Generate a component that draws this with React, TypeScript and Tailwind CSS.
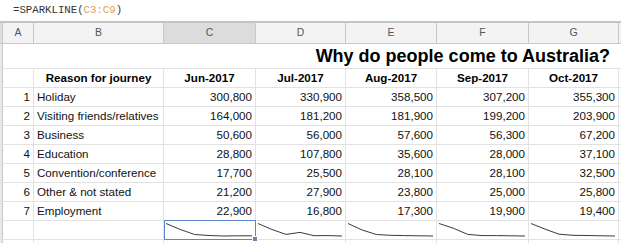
import React from "react";

const cols = [
  { key: "A", w: 31 },
  { key: "B", w: 130 },
  { key: "C", w: 92 },
  { key: "D", w: 90 },
  { key: "E", w: 91 },
  { key: "F", w: 92 },
  { key: "G", w: 90 },
];

const months = ["Jun-2017", "Jul-2017", "Aug-2017", "Sep-2017", "Oct-2017"];

const rows: [string, number[]][] = [
  ["Holiday", [300800, 330900, 358500, 307200, 355300]],
  ["Visiting friends/relatives", [164000, 181200, 181900, 199200, 203900]],
  ["Business", [50600, 56000, 57600, 56300, 67200]],
  ["Education", [28800, 107800, 35600, 28000, 37100]],
  ["Convention/conference", [17700, 25500, 28100, 28100, 32500]],
  ["Other & not stated", [21200, 27900, 23800, 25000, 25800]],
  ["Employment", [22900, 16800, 17300, 19900, 19400]],
];

const fmt = (n: number) => n.toLocaleString("en-US");

function Spark({ values, w }: { values: number[]; w: number }) {
  const max = Math.max(...values);
  const min = Math.min(...values);
  const h = 18;
  const top = 2.5;
  const bottom = 15;
  const pts = values
    .map((v, i) => {
      const x = 2 + (i * (w - 5)) / (values.length - 1);
      const y = top + ((max - v) / (max - min)) * (bottom - top);
      return `${x.toFixed(1)},${y.toFixed(1)}`;
    })
    .join(" ");
  return (
    <svg width={w} height={h} className="block">
      <polyline points={pts} fill="none" stroke="#3a3a3a" strokeWidth="1" />
    </svg>
  );
}

export default function App() {
  const font = { fontFamily: '"Liberation Sans", Arial, sans-serif' };
  return (
    <div className="w-[621px] h-[243px] overflow-hidden bg-white text-[#222]" style={font}>
      {/* formula bar */}
      <div className="h-[23px] flex items-center pl-[13px] pb-[1px] border-b-2 border-[#c4c4c4] bg-white">
        <span className="text-[10.7px] text-[#333]" style={{ fontFamily: '"Liberation Mono", monospace' }}>
          =SPARKLINE(<span className="text-[#d6a35c]">C3:C9</span>)
        </span>
      </div>
      {/* column headers */}
      <div className="flex h-[21px] border-b border-[#c8c8c8] bg-[#f3f3f3]">
        <div className="w-[3px] shrink-0 bg-[#dedede] border-r border-[#c8c8c8]" />
        {cols.map((c) => (
          <div
            key={c.key}
            className={`shrink-0 border-r border-[#c8c8c8] flex items-center justify-center text-[10.5px] text-[#555] ${
              c.key === "C" ? "bg-[#dcdcdc]" : ""
            }`}
            style={{ width: c.w }}
          >
            {c.key}
          </div>
        ))}
        <div className="flex-1" />
      </div>
      {/* title row */}
      <div className="flex h-[25px] border-b border-[#e2e2e2]">
        <div className="w-[3px] shrink-0 bg-[#e9e9e9] border-r border-[#c8c8c8]" />
        <div className="w-[616px] shrink-0 flex items-center justify-end pr-[9px] pt-[1px] text-[18px] font-bold text-black">
          Why do people come to Australia?
        </div>
      </div>
      {/* header row */}
      <div className="flex h-[19px] border-b border-[#e2e2e2] text-[11.6px] font-bold text-black">
        <div className="w-[3px] shrink-0 bg-[#e9e9e9] border-r border-[#c8c8c8]" />
        <div className="w-[31px] shrink-0 border-r border-[#e2e2e2]" />
        <div className="w-[130px] shrink-0 border-r border-[#e2e2e2] flex items-center justify-center">
          Reason for journey
        </div>
        {months.map((m, i) => (
          <div
            key={m}
            className="shrink-0 border-r border-[#e2e2e2] flex items-center justify-center"
            style={{ width: cols[i + 2].w }}
          >
            {m}
          </div>
        ))}
      </div>
      {/* data rows */}
      {rows.map(([label, vals], r) => (
        <div key={label} className="flex h-[19px] border-b border-[#e2e2e2] text-[11.6px] text-[#111]">
          <div className="w-[3px] shrink-0 bg-[#e9e9e9] border-r border-[#c8c8c8]" />
          <div className="w-[31px] shrink-0 border-r border-[#e2e2e2] flex items-center justify-end pr-[3px]">
            {r + 1}
          </div>
          <div className="w-[130px] shrink-0 border-r border-[#e2e2e2] flex items-center pl-[3px] whitespace-nowrap">
            {label}
          </div>
          {vals.map((v, i) => (
            <div
              key={i}
              className="shrink-0 border-r border-[#e2e2e2] flex items-center justify-end pr-[3px]"
              style={{ width: cols[i + 2].w }}
            >
              {fmt(v)}
            </div>
          ))}
        </div>
      ))}
      {/* sparkline row */}
      <div className="flex h-[19px] border-b border-[#e2e2e2]">
        <div className="w-[3px] shrink-0 bg-[#e9e9e9] border-r border-[#c8c8c8]" />
        <div className="w-[31px] shrink-0 border-r border-[#e2e2e2]" />
        <div className="w-[130px] shrink-0 border-r border-[#e2e2e2]" />
        {months.map((m, i) => (
          <div
            key={m}
            className="shrink-0 border-r border-[#e2e2e2] relative"
            style={{ width: cols[i + 2].w }}
          >
            <Spark values={rows.map((r) => r[1][i])} w={cols[i + 2].w - 1} />
            {i === 0 && (
              <>
                <div className="absolute left-0 top-[-1px] w-[92px] h-[20px] border border-[#5a87c9]" />
                <div className="absolute right-[-3px] bottom-[-3px] w-[6px] h-[6px] bg-[#5a87c9] border border-white" />
              </>
            )}
          </div>
        ))}
      </div>
      {/* partial row */}
      <div className="flex h-[10px]">
        <div className="w-[3px] shrink-0 bg-[#e9e9e9] border-r border-[#c8c8c8]" />
        <div className="w-[31px] shrink-0 border-r border-[#e2e2e2]" />
        <div className="w-[130px] shrink-0 border-r border-[#e2e2e2]" />
        {months.map((m, i) => (
          <div key={m} className="shrink-0 border-r border-[#e2e2e2]" style={{ width: cols[i + 2].w }} />
        ))}
      </div>
    </div>
  );
}
